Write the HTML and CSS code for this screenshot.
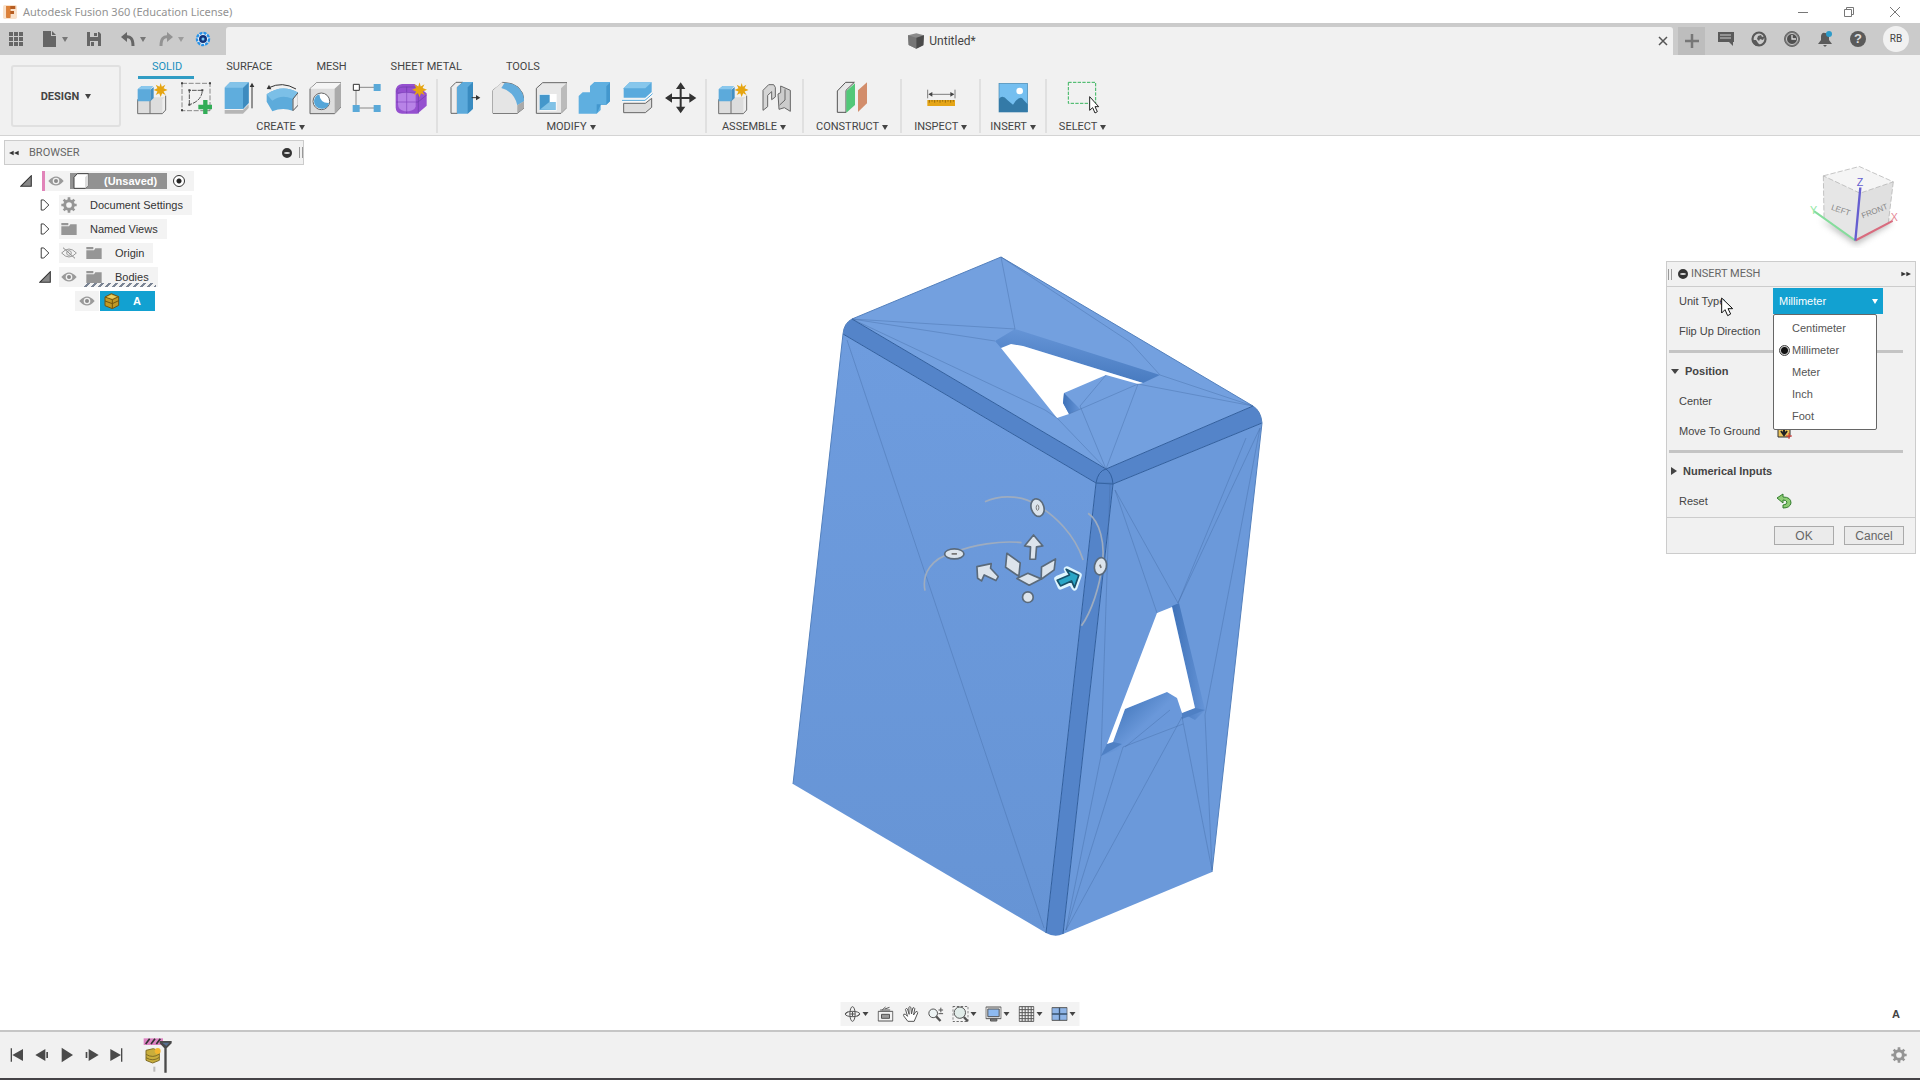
FILE: index.html
```html
<!DOCTYPE html>
<html lang="en">
<head>
<meta charset="utf-8">
<title>Autodesk Fusion 360 (Education License)</title>
<link rel="stylesheet" href="styles.css">
</head>
<body>
<svg class="sprite" aria-hidden="true">
  <symbol id="eye" viewBox="0 0 48 30"><path d="M1 15Q24-12 47 15Q24 42 1 15Z" fill="#9a9a9a"/><circle cx="24" cy="15" r="10" fill="#f1f1f1"/><circle cx="24" cy="15" r="6" fill="#8b8b8b"/></symbol>
  <symbol id="eye-off" viewBox="0 0 48 36"><path d="M2 18Q24-6 46 18Q24 42 2 18Z" fill="none" stroke="#9a9a9a" stroke-width="3"/><circle cx="24" cy="18" r="7" fill="none" stroke="#9a9a9a" stroke-width="3"/><path d="M6 2L42 34" stroke="#8b8b8b" stroke-width="3"/></symbol>
  <symbol id="folder" viewBox="0 0 48 40"><path d="M1 2H22V9H1ZM1 12H24L28 6H47V38H1Z" fill="#969696"/></symbol>
  <symbol id="closed" viewBox="0 0 30 38"><path d="M3 3H11L27 19L11 35H3Z" fill="#fff" stroke="#333" stroke-width="3"/></symbol>
  <symbol id="open" viewBox="0 0 34 34"><path d="M32 2V32H2Z" fill="#888" stroke="#333" stroke-width="3"/></symbol>
  <symbol id="gear" viewBox="0 0 48 48"><circle cx="24" cy="24" r="13" fill="none" stroke="#959595" stroke-width="9"/><path d="M24 1V10M24 38V47M1 24H10M38 24H47M8 8L14 14M34 34L40 40M40 8L34 14M14 34L8 40" stroke="#959595" stroke-width="8"/></symbol>
  <symbol id="star" viewBox="0 0 48 48"><path d="M24 0L28 13L40 6L34 18L48 24L34 29L41 41L29 35L24 48L19 35L7 41L13 29L0 24L13 18L7 6L20 13Z" fill="#e6a511"/></symbol>
  <symbol id="component" viewBox="0 0 102 102"><path d="M8 55H45V98H8ZM45 55L56 49H92V88L82 98H45Z" fill="#ddd"/><path d="M45 55H82L92 46V87L82 98V55" fill="#eee"/><path d="M8 55V98H82L92 87V44M45 98V57" fill="none" stroke="#6f6f6f" stroke-width="3"/><path d="M8 25L20 15H52L46 25V61H8Z" fill="#5caadb"/><path d="M8 25L20 15H55L46 25Z" fill="#8ac8ed"/><path d="M46 61L56 51V18L46 26Z" fill="#438fc3"/><use href="#star" x="56" y="6" width="42" height="42"/></symbol>
</svg>

<div class="app">
  <header class="titlebar">
    <svg class="app-logo" viewBox="0 0 42 42"><rect width="42" height="42" rx="5" fill="#fae2cb"/><path d="M10 3H37V12H22V18H33V27H22V38H10Z" fill="#b65d22"/><path d="M10 3H22V38H10Z" fill="#de8137"/></svg>
    <span class="app-name">Autodesk Fusion 360 (Education License)</span>
    <div class="window-buttons">
      <button aria-label="Minimize"><svg viewBox="0 0 12 12"><path d="M1 6.500H11" class="thin"/></svg></button>
      <button aria-label="Restore"><svg viewBox="0 0 12 12"><path d="M1.500 3.500H8.500V10.500H1.500ZM3.500 3V1.500H10.500V8.500H9" class="thin"/></svg></button>
      <button aria-label="Close"><svg viewBox="0 0 12 12"><path d="M1 1L11 11M11 1L1 11" class="thin"/></svg></button>
    </div>
  </header>

  <div class="tabstrip">
    <div class="quick">
      <button aria-label="Data panel"><svg viewBox="0 0 16 16"><path d="M1 1H5V5H1ZM6 1H10V5H6ZM11 1H15V5H11ZM1 6H5V10H1ZM6 6H10V10H6ZM11 6H15V10H11ZM1 11H5V15H1ZM6 11H10V15H6ZM11 11H15V15H11Z" fill="#666"/></svg></button>
      <button class="with-caret" aria-label="File"><svg viewBox="0 0 16 16"><path d="M1 0H9V5H14V16H1ZM10 0L14 4H10Z" fill="#666"/></svg><i class="caret"></i></button>
      <button class="save" aria-label="Save"><svg viewBox="0 0 16 16"><path d="M1 1H13L15 3V15H1Z" fill="#666"/><path d="M4 1H12V6H4ZM4 10H12V15H4Z" fill="#cbcbcb"/><path d="M8 2H11V5H8ZM5 11H8V15H5Z" fill="#666"/></svg></button>
      <button class="with-caret undo" aria-label="Undo"><svg viewBox="0 0 16 16"><path d="M1 6L7 1V11Z" fill="#666"/><path d="M5 6Q13 4 13 15" fill="none" stroke="#666" stroke-width="3"/></svg><i class="caret"></i></button>
      <button class="with-caret redo" aria-label="Redo"><svg viewBox="0 0 16 16"><path d="M15 6L9 1V11Z" fill="#666"/><path d="M11 6Q3 4 3 15" fill="none" stroke="#666" stroke-width="3"/></svg><i class="caret"></i></button>
      <button aria-label="Online"><svg viewBox="0 0 16 16"><circle cx="8" cy="8" r="6" fill="#fff" stroke="#2792e8" stroke-width="2.400" stroke-dasharray="3 1"/><circle cx="8" cy="8" r="4" fill="#12347b"/><circle cx="8" cy="8" r="1.500" fill="#77c8f5"/></svg></button>
    </div>
    <div class="doc-tab">
      <svg class="doc-icon" viewBox="0 0 48 46"><path d="M0 6L25 0L48 6L46 36L25 46L2 35Z" fill="#8b8b8b"/><path d="M0 6L25 13V46L2 35Z" fill="#767676"/><path d="M25 13L48 6L46 36L25 46Z" fill="#4b4b4b"/></svg>
      <span>Untitled*</span>
      <button class="doc-close" aria-label="Close tab"><svg viewBox="0 0 10 10"><path d="M1 1L9 9M9 1L1 9" stroke="#555" stroke-width="1.500"/></svg></button>
    </div>
    <button class="new-tab" aria-label="New tab"><svg viewBox="0 0 16 16"><path d="M8 1V15M1 8H15" stroke="#777" stroke-width="2.500"/></svg></button>
    <div class="account">
      <button aria-label="Comments"><svg viewBox="0 0 16 16"><path d="M0 1H16V11H15V15L11 11H0Z" fill="#5a5a5a"/><path d="M2 4H13M2 7H13" stroke="#ccc"/></svg></button>
      <button aria-label="Extensions"><svg viewBox="0 0 16 16"><circle cx="8" cy="8" r="6.500" fill="#cbcbcb" stroke="#5a5a5a" stroke-width="2.200"/><path d="M1 9H5L7 12L10 15H5Q2 13 1 9ZM7 5L10 4L11 6L14 5L12 9L9 8L8 10L6 8Z" fill="#5a5a5a"/></svg></button>
      <button aria-label="Job status"><svg viewBox="0 0 16 16"><circle cx="8" cy="8" r="7.500" fill="#777" stroke="#666"/><circle cx="8" cy="8" r="5.500" fill="#505050" stroke="#ccc"/><path d="M8 4V8H12" fill="none" stroke="#ddd" stroke-width="1.300"/></svg></button>
      <button aria-label="Notifications"><svg viewBox="0 0 16 16"><path d="M1 13L4 9V5Q5 1 8 2Q12 2 12 6V9L15 13ZM6 14H10L8 16Z" fill="#5a5a5a"/><circle cx="12" cy="3" r="3" fill="#2d9bc9"/></svg></button>
      <button class="help" aria-label="Help">?</button>
      <button class="avatar">RB</button>
    </div>
  </div>

  <nav class="ribbon">
    <button class="workspace">DESIGN <i class="caret"></i></button>
    <div class="ribbon-main">
      <div class="ribbon-tabs">
        <button class="active">SOLID</button><button>SURFACE</button><button>MESH</button><button>SHEET METAL</button><button>TOOLS</button>
      </div>
      <div class="groups">
        <section class="group">
          <div class="tools">
            <button aria-label="New component"><svg viewBox="0 0 102 102"><use href="#component"/></svg></button>
            <button aria-label="Create sketch"><svg viewBox="532 243 102 102"><path d="M544 250H628V332H544Z" fill="none" stroke="#555" stroke-width="2" stroke-dasharray="15 5"/><path d="M566 314V271H605Q603 303 566 314" fill="none" stroke="#555" stroke-width="3" stroke-dasharray="14 3"/><path d="M541 247h6v6h-6zM625 247h6v6h-6zM541 328h6v6h-6zM563 268h6v6h-6zM602 268h6v6h-6zM563 311h6v6h-6z" fill="#444"/><path d="M614 300V342M593 321H636" stroke="#32ad57" stroke-width="13"/></svg></button>
            <button aria-label="Extrude"><svg viewBox="661 243 102 102"><path d="M672 330H727L744 313V324L727 341H672Z" fill="#b6b6b6"/><path d="M672 263L688 247H744V309L727 327H672Z" fill="#5faddd"/><path d="M727 263L744 247V309L727 327Z" fill="#3e8bbf"/><path d="M672 263L688 247H744L727 263Z" fill="#83c3e9"/><path d="M754 325V256" stroke="#333" stroke-width="3"/><path d="M747 261L754 248L761 261Z" fill="#333"/></svg></button>
            <button aria-label="Revolve"><svg viewBox="790 243 102 102"><path d="M798 283Q845 250 894 279L876 300V332Q845 321 815 334L798 305Z" fill="#5dabdb"/><path d="M798 283Q845 250 894 279L875 296Q842 282 815 302Z" fill="#7bbfe7"/><path d="M877 297L893 277V315L877 332Z" fill="#eee" stroke="#555" stroke-width="3"/><path d="M886 267Q845 243 805 263" fill="none" stroke="#333" stroke-width="3"/><path d="M798 267L805 254L812 268Z" fill="#333"/></svg></button>
            <button aria-label="Hole"><svg viewBox="919 243 102 102"><path d="M928 266L948 248H1022V320L1002 341H928Z" fill="#ddd" stroke="#666" stroke-width="3"/><path d="M928 266L948 248H1022L1002 266Z" fill="#f5f5f5"/><path d="M1002 266L1022 248V320L1002 341Z" fill="#aaa"/><circle cx="962" cy="304" r="25" fill="#fff" stroke="#666" stroke-width="3"/><path d="M956 283Q958 310 985 309Q981 328 962 326Q940 324 940 303Q941 288 956 283Z" fill="#55a6d8"/></svg></button>
            <button aria-label="Pattern"><svg viewBox="1048 243 102 102"><path d="M1066 262H1128M1066 262V324H1128" fill="none" stroke="#555" stroke-width="2"/><path d="M1058 253h18v18h-18z" fill="#fff" stroke="#333" stroke-width="3"/><path d="M1119 252h21v21h-21zM1119 315h21v21h-21zM1056 315h21v21h-21z" fill="#5aa9d8"/></svg></button>
            <button aria-label="Create form"><svg viewBox="1177 243 102 102"><path d="M1204 252H1242L1278 280V317L1250 341H1204Q1185 341 1185 322V275Q1185 254 1204 252Z" fill="#9550cf"/><path d="M1188 277Q1190 261 1207 261H1248L1253 286V341M1218 260V340M1187 306H1252L1278 285M1188 279H1252" fill="none" stroke="#6e3baa" stroke-width="2"/><path d="M1192 282Q1215 274 1245 282V320Q1241 334 1212 334Q1192 330 1192 312Z" fill="#c090ec" opacity=".8"/><path d="M1218 278V333M1192 306H1245" stroke="#8847c2" stroke-width="2"/><use href="#star" x="1234" y="247" width="45" height="45"/></svg></button>
          </div>
          <button class="group-name">CREATE <i class="caret"></i></button>
        </section>
        <section class="group">
          <div class="tools">
            <button aria-label="Press pull"><svg viewBox="139 93 102 102"><path d="M151 112L166 97H187L170 112V190H151Z" fill="#eee" stroke="#666" stroke-width="3"/><path d="M169 112L186 96H217V176L201 191H169Z" fill="#5caadb"/><path d="M201 112L217 96V176L201 191Z" fill="#398bc0"/><path d="M213 143H229" stroke="#333" stroke-width="3"/><path d="M226 135L239 143L226 151Z" fill="#333"/></svg></button>
            <button aria-label="Fillet"><svg viewBox="268 93 102 102"><path d="M277 121L306 97Q367 98 371 154V173L350 190H277Z" fill="#ddd" stroke="#666" stroke-width="3"/><path d="M277 121L302 98L315 99L303 116Q342 120 349 165L351 189H277Z" fill="#e5e5e5"/><path d="M312 98Q365 101 371 153L350 166Q341 125 302 114Z" fill="#63addd"/><path d="M350 166L371 153V173L350 190Z" fill="#aaa"/></svg></button>
            <button aria-label="Shell"><svg viewBox="397 93 102 102"><path d="M407 115L426 98H499V172L481 190H407Z" fill="#e8e8e8" stroke="#666" stroke-width="3"/><path d="M481 115L499 98V172L481 190Z" fill="#bbb"/><path d="M417 132H468V182H417Z" fill="#fff"/><path d="M417 134H447V156H464V180H417Z" fill="#4497cb"/><path d="M417 179L446 156H465V180Z" fill="#81c2e6"/></svg></button>
            <button aria-label="Combine"><svg viewBox="526 93 102 102"><path d="M534 138L546 127H568V108L581 96H630V152L617 164H600V180L588 191H534Z" fill="#5fafe0"/><path d="M617 109L630 96V152L617 164H600L588 191V163H617Z" fill="#4397cd"/></svg></button>
            <button aria-label="Split body"><svg viewBox="655 93 102 102"><path d="M669 115L687 97H753V126L734 143H669Z" fill="#59aadd"/><path d="M669 115L687 97H753L734 115Z" fill="#87c7ec"/><path d="M669 160H734L753 145V172L734 188H669Z" fill="#ddd" stroke="#666" stroke-width="3"/><path d="M664 151H733L756 131" fill="none" stroke="#fff" stroke-width="7"/><path d="M664 151H733L756 131" fill="none" stroke="#4fa4d7" stroke-width="3"/></svg></button>
            <button aria-label="Move"><svg class="move" viewBox="784 93 102 102"><path d="M840 106V181M804 144H877" stroke="#333" stroke-width="6"/><path d="M826 117L840 97L854 117ZM826 170L840 190L854 170ZM814 130L793 144L814 158ZM866 130L887 144L866 158Z" fill="#333"/></svg></button>
          </div>
          <button class="group-name">MODIFY <i class="caret"></i></button>
        </section>
        <section class="group">
          <div class="tools">
            <button aria-label="New component"><svg viewBox="0 0 102 102"><use href="#component"/></svg></button>
            <button aria-label="Joint"><svg viewBox="178 183 102 102"><path d="M190 211L207 194H222L227 202V231L216 239V215L204 226V260L190 271Z" fill="#d5d5d5" stroke="#666" stroke-width="3"/><path d="M243 198L272 211V274L254 263L238 268L235 222L243 218Z" fill="#ccc" stroke="#666" stroke-width="3"/><path d="M256 208V240L240 255" fill="none" stroke="#666" stroke-width="3"/></svg></button>
          </div>
          <button class="group-name">ASSEMBLE <i class="caret"></i></button>
        </section>
        <section class="group single">
          <div class="tools">
            <button aria-label="Construct plane"><svg viewBox="408 183 102 102"><path d="M415 213L440 187H466L441 211V277H415Z" fill="#e8e8e8" stroke="#555" stroke-width="3"/><path d="M442 213L468 190V255L442 278Z" fill="#52c878"/><path d="M477 211L504 187V250L477 276Z" fill="#d28d6b"/></svg></button>
          </div>
          <button class="group-name">CONSTRUCT <i class="caret"></i></button>
        </section>
        <section class="group single">
          <div class="tools">
            <button aria-label="Measure"><svg viewBox="674 183 102 102"><path d="M685 209V235M767 209V235M690 223H762" stroke="#444" stroke-width="2"/><path d="M687 223L699 216V230ZM765 223L753 216V230Z" fill="#444"/><rect x="684" y="240" width="83" height="18" fill="#e5a516"/><path d="M690 240V248M698 240V245M706 240V248M714 240V245M722 240V248M730 240V245M738 240V248M746 240V245M754 240V248M762 240V245" stroke="#765000" stroke-width="2"/></svg></button>
          </div>
          <button class="group-name">INSPECT <i class="caret"></i></button>
        </section>
        <section class="group tight">
          <div class="tools">
            <button aria-label="Insert image"><svg viewBox="895 183 102 102"><rect x="904" y="190" width="86" height="86" fill="#75bff0" stroke="#4688b0" stroke-width="2"/><path d="M904 236Q915 223 929 240L946 254Q967 222 978 240L990 253V276H904Z" fill="#347aa7"/><circle cx="966" cy="213" r="10" fill="#fff"/></svg></button>
          </div>
          <button class="group-name">INSERT <i class="caret"></i></button>
        </section>
        <section class="group single">
          <div class="tools">
            <button aria-label="Select"><svg viewBox="1110 183 102 102"><rect x="1117" y="187" width="82" height="63" fill="none" stroke="#36b45c" stroke-width="3" stroke-dasharray="10 4"/><path d="M1181 230V271L1190 263L1197 279L1204 275L1197 260H1208Z" fill="#fff" stroke="#222" stroke-width="3"/></svg></button>
          </div>
          <button class="group-name">SELECT <i class="caret"></i></button>
        </section>
      </div>
    </div>
  </nav>

  <main class="viewport">
    <svg class="model" viewBox="0 136 1920 894" role="img" aria-label="Mesh body A">
      <defs>
        <linearGradient id="frontFace" x1="0" y1="0" x2="0" y2="1"><stop offset="0" stop-color="#6e9cde"/><stop offset="1" stop-color="#6694d5"/></linearGradient>
        <linearGradient id="wall" x1="0" y1="1" x2="0.300" y2="0"><stop offset="0" stop-color="#3e72b8"/><stop offset="1" stop-color="#6796d8"/></linearGradient>
        <linearGradient id="wallSide" x1="0" y1="0" x2="1" y2="0"><stop offset="0" stop-color="#3f72b8"/><stop offset="1" stop-color="#6594d7"/></linearGradient>
        <linearGradient id="shade" gradientUnits="userSpaceOnUse" x1="1117" y1="705" x2="1150" y2="740"><stop offset="0" stop-color="#4478bc"/><stop offset=".7" stop-color="#6a98da"/></linearGradient>
      </defs>
      <path d="M1001 257L1253 406L1106 469L852 319Z" fill="#73a0df"/>
      <path d="M843 334L1096 483L1046 933L793 784Z" fill="url(#frontFace)"/>
      <path d="M1113 484L1262 423L1212 872L1063 934Z" fill="#6b99da"/>
      <path d="M843 334Q844 323 852 319L1106 469L1096 483ZM1106 469L1253 406Q1261 411 1262 423L1113 484ZM1096 483Q1098 471 1106 469Q1112 473 1113 484L1063 934Q1055 938 1046 933Z" fill="#5484c9"/>
      <path d="M852 319L1106 469L1253 406M843 334L1096 483L1046 933M1262 423L1113 484L1063 934M1096 483Q1098 471 1106 469Q1112 473 1113 484Z" fill="none" stroke="#315f9e" stroke-width="1"/>
      <path d="M1096 483H1112" fill="none" stroke="#416fae" stroke-width="1" opacity=".5"/>
      <path d="M793 784L843 334Q844 323 852 319L1001 257L1253 406Q1261 411 1262 423L1212 872" fill="none" stroke="#5380bd" stroke-width="1"/>
      <path d="M995 341L1015 329L1160 375L1143 383L1023 346L1001 348Z" fill="url(#wall)"/>
      <path d="M1001 348L1011 344L1023 346L1143 383L1138 384L1106 375L1064 393L1063 403L1069 414L1057 418Z" fill="#fff"/>
      <path d="M1064 393L1080 409L1069 414L1063 403Z" fill="url(#wallSide)"/>
      <path d="M1172 606L1179 603L1205 710L1195 720L1182 713L1195 708Z" fill="url(#wallSide)"/>
      <path d="M1125 709L1167 692L1177 698L1181 720L1128 746L1101 756L1107 744L1113 742Z" fill="url(#shade)"/>
      <path d="M1107 744L1113 742L1122 744L1101 756ZM1182 713L1195 708L1205 710L1182 719Z" fill="#4f80c4"/>
      <path d="M1157 613L1172 607L1195 708L1182 713L1177 698L1167 692L1125 709L1113 742L1107 744Z" fill="#fff"/>
      <path d="M1001 257L1015 329L852 319L995 341M1001 257L1130 342L1160 375L1253 406L1138 384L1069 414M852 319L1045 410L1057 418L1106 469L1080 406L1106 375M1106 469L1138 384M847 340L1044 928M1115 490L1157 613M1115 490L1178 603L1260 428L1205 715L1212 870L1182 717L1066 930L1123 747L1183 724M1110 484L1101 756L1066 930M1246 438L1178 603M1125 747L1170 710" fill="none" stroke="#436ca5" stroke-width="1" opacity=".4"/>
      <g transform="translate(900 470) scale(.333)" stroke-linejoin="round">
        <path d="M255 95C310 70 375 80 410 105C465 135 525 195 550 270M75 362C65 310 95 265 160 248C220 225 300 211 365 218M565 130C600 155 617 220 607 285C600 350 575 425 545 468" fill="none" stroke="#9eacbf" stroke-width="5"/>
        <g fill="#dce4ec" stroke="#5a6a7b" stroke-width="5">
          <ellipse cx="413" cy="113" rx="19" ry="27" transform="rotate(-18 413 113)"/><ellipse cx="163" cy="252" rx="29" ry="15"/><ellipse cx="602" cy="289" rx="18" ry="26" transform="rotate(12 602 289)"/><circle cx="384" cy="382" r="16"/>
          <path d="M390 268L392 231L374 228L401 195L429 228L410 231L407 268ZM231 290L274 281L272 295L295 320L288 332L253 315L245 333L233 325ZM321 250L361 279L357 319L317 292ZM467 267L463 300L424 328L425 291ZM351 326L384 310L424 327L388 346Z"/>
        </g>
        <ellipse cx="413" cy="113" rx="4" ry="8" fill="none" stroke="#777" stroke-width="3"/><path d="M155 252H171M600 284L604 294" stroke="#777" stroke-width="5"/>
        <path d="M472 327L509 312L501 298L537 316L524 353L514 336L482 350Z" fill="#29b0d2" stroke="#e0f6ff" stroke-width="18"/><path d="M472 331L509 315L499 298L537 316L524 353L515 333L482 348Z" fill="#29a6c7" stroke="#17516a" stroke-width="5"/>
      </g>
    </svg>

    <aside class="browser">
      <header class="palette-head"><svg class="arrows" viewBox="0 0 30 14"><path d="M14 0V14L0 7ZM29 0V14L15 7Z" fill="#333"/></svg><span>BROWSER</span><i class="minus"></i><i class="grip"></i></header>
      <ul class="tree">
        <li class="lvl-root"><svg class="toggle" viewBox="0 0 34 34"><use href="#open"/></svg><div class="node marked"><svg class="ico eye"><use href="#eye"/></svg><div class="doc-label"><svg class="ico" viewBox="0 0 48 48"><path d="M3 13L13 2H46V38L36 46H3Z" fill="#fff" stroke="#444" stroke-width="3"/><path d="M36 13L46 3V38L36 46Z" fill="#ddd"/></svg><b>(Unsaved)</b></div><input type="radio" checked aria-label="Activate component"></div></li>
        <li><svg class="toggle"><use href="#closed"/></svg><div class="node"><svg class="ico"><use href="#gear"/></svg><span>Document Settings</span></div></li>
        <li><svg class="toggle"><use href="#closed"/></svg><div class="node"><svg class="ico"><use href="#folder"/></svg><span>Named Views</span></div></li>
        <li><svg class="toggle"><use href="#closed"/></svg><div class="node"><svg class="ico"><use href="#eye-off"/></svg><svg class="ico second"><use href="#folder"/></svg><span>Origin</span></div></li>
        <li><svg class="toggle"><use href="#open"/></svg><div class="node hatched"><svg class="ico"><use href="#eye"/></svg><svg class="ico second"><use href="#folder"/></svg><span>Bodies</span></div></li>
        <li class="lvl-body"><div class="node"><svg class="ico"><use href="#eye"/></svg></div><div class="selected"><svg class="ico" viewBox="0 0 48 48"><path d="M3 12L22 2L44 11V37L25 47L3 38Z" fill="#c19a25" stroke="#725511" stroke-width="3"/><path d="M3 12L25 20L44 11M25 20V47M3 24L25 32L44 23" fill="none" stroke="#72550f" stroke-width="3"/><path d="M8 12L22 5L38 11L25 17Z" fill="#e9cc62"/></svg><b>A</b></div></li>
      </ul>
    </aside>

    <svg class="viewcube" viewBox="480 40 270 275" role="img" aria-label="View cube">
      <defs><filter id="soft"><feGaussianBlur stdDeviation="9"/></filter></defs>
      <path d="M510 210L618 285L725 220L690 190L610 240Z" fill="#777" opacity=".5" filter="url(#soft)"/>
      <path d="M520 78L628 50L730 96L630 130Z" fill="#f5f5f5"/><path d="M520 78L630 130L616 272L522 205Z" fill="#e6e6e6"/><path d="M630 130L730 96L715 218L616 272Z" fill="#e0e0e0"/>
      <path d="M520 78L628 50L730 96L630 130ZM520 78L522 205M730 96L715 218" fill="none" stroke="#aaa" stroke-width="2" stroke-dasharray="16 6"/>
      <path d="M492 184L616 272" stroke="#85dd9c" stroke-width="6"/><path d="M616 272L728 213" stroke="#d96b7e" stroke-width="6"/><path d="M616 272L631 113" stroke="#655ed0" stroke-width="7"/>
      <text x="542" y="179" class="face" transform="rotate(19 542 179)">LEFT</text><text x="638" y="206" class="face" transform="rotate(-21 638 206)">FRONT</text>
      <text x="620" y="108" class="axis" fill="#655ed0">Z</text><text x="722" y="215" class="axis" fill="#e58795">X</text><text x="480" y="193" class="axis" fill="#91e8a4">Y</text>
    </svg>

    <section class="dialog">
      <header class="palette-head"><i class="grip"></i><i class="minus"></i><span>INSERT MESH</span><svg class="arrows" viewBox="0 0 30 14"><path d="M1 0V14L15 7ZM16 0V14L30 7Z" fill="#333"/></svg></header>
      <div class="row"><label for="unit">Unit Type</label>
        <div class="unit">
          <select id="unit"><option>Millimeter</option><option>Centimeter</option><option>Meter</option><option>Inch</option><option>Foot</option></select><i class="caret"></i>
          <div class="unit-menu">
            <label><input type="radio" name="u">Centimeter</label><label><input type="radio" name="u" checked>Millimeter</label><label><input type="radio" name="u">Meter</label><label><input type="radio" name="u">Inch</label><label><input type="radio" name="u">Foot</label>
          </div>
        </div>
      </div>
      <div class="row"><span>Flip Up Direction</span></div>
      <hr>
      <button class="row fold"><i class="caret"></i>Position</button>
      <div class="row"><span>Center</span></div>
      <div class="row"><span>Move To Ground</span><button class="tool" aria-label="Move to ground"><svg viewBox="0 0 16 16"><path d="M2 2H14V14H2Z" fill="#ebc45c" stroke="#333"/><path d="M8 2V11M5 8L8 12L11 8" fill="none" stroke="#222" stroke-width="2"/><path d="M10 13H16M13 10V16" stroke="#d33"/></svg></button></div>
      <hr>
      <button class="row fold"><i class="caret right"></i>Numerical Inputs</button>
      <div class="row"><span>Reset</span><button class="tool" aria-label="Reset"><svg viewBox="0 0 16 16"><path d="M1 5L7 1V4Q15 4 15 10Q14 15 7 15V12Q11 12 11 9Q10 7 7 7V10Z" fill="#8dcc74" stroke="#337d2e"/></svg></button></div>
      <footer><button>OK</button><button>Cancel</button></footer>
    </section>
    <svg class="pointer" viewBox="0 0 36 60"><path d="M2 3V48L12 38L20 56L29 51L21 35H35Z" fill="#fff" stroke="#111" stroke-width="3"/></svg>

    <div class="navbar">
      <button aria-label="Orbit"><svg viewBox="0 0 48 48"><ellipse cx="24" cy="24" rx="22" ry="8"/><ellipse cx="24" cy="24" rx="8" ry="22"/><path d="M17 24H31M24 17V31M2 24L10 18M46 24L38 30"/></svg><i class="caret"></i></button>
      <button aria-label="Look at"><svg viewBox="0 0 48 48"><path d="M2 16H46V45H2Z"/><path d="M12 25H36V37H12Z" fill="#999"/><path d="M8 12H38M14 12L24 3M22 9L36 4"/></svg></button>
      <button aria-label="Pan"><svg viewBox="0 0 48 48"><path d="M16 46L3 29Q2 22 9 25L15 31L9 10Q11 5 15 9L20 25L19 4Q22 0 25 4L27 24L31 6Q35 3 37 8L33 27L40 17Q45 15 46 20L35 46Z" fill="#fff"/></svg></button>
      <button aria-label="Zoom"><svg viewBox="0 0 48 48"><circle cx="17" cy="22" r="13" fill="#edf3f4"/><path d="M26 31L39 45" stroke-width="7"/><path d="M33 12H47M40 5V19M33 23H47"/></svg></button>
      <button aria-label="Fit"><svg viewBox="0 0 48 48"><path d="M1 1H47V47H1Z" stroke-dasharray="7 5"/><circle cx="22" cy="20" r="17" fill="#e1ece9"/><path d="M34 33L46 46" stroke-width="7"/></svg><i class="caret"></i></button>
      <button aria-label="Display settings"><svg viewBox="0 0 48 48"><path d="M1 3H47V38H1Z" fill="#e7e7e7"/><path d="M7 9H41V32H7Z" fill="#8ebaf0"/><path d="M15 39H34V45H15Z" fill="#888"/></svg><i class="caret"></i></button>
      <button aria-label="Grid settings"><svg viewBox="0 0 48 48"><path d="M2 2H46V46H2ZM11 2V46M20 2V46M29 2V46M38 2V46M2 11H46M2 20H46M2 29H46M2 38H46"/></svg><i class="caret"></i></button>
      <button aria-label="Viewports"><svg viewBox="0 0 48 48"><path d="M1 5H47V43H1Z" fill="#8fb5e7"/><path d="M24 5V43M1 24H47" stroke="#39516d" stroke-width="4"/></svg><i class="caret"></i></button>
    </div>
    <b class="status">A</b>
  </main>

  <footer class="timeline">
    <div class="playback">
      <button aria-label="First"><svg viewBox="0 0 48 48"><path d="M7 4V44" stroke="#4a4a4a" stroke-width="4"/><path d="M42 6V42L10 24Z"/></svg></button>
      <button aria-label="Step back"><svg viewBox="0 0 48 48"><path d="M34 6V42L4 24ZM37 15H42V33H37Z"/></svg></button>
      <button aria-label="Play"><svg viewBox="0 0 48 48"><path d="M8 2V46L42 24Z"/></svg></button>
      <button aria-label="Step forward"><svg viewBox="0 0 48 48"><path d="M14 6V42L44 24ZM5 15H10V33H5Z"/></svg></button>
      <button aria-label="Last"><svg viewBox="0 0 48 48"><path d="M38 4V44" stroke="#4a4a4a" stroke-width="4"/><path d="M4 6V42L36 24Z"/></svg></button>
    </div>
    <svg class="feature" viewBox="430 48 90 114"><path d="M432 55H490V75H432Z" fill="#dc82c1"/><path d="M438 72L450 56M454 72L466 56M470 72L482 56" stroke="#333" stroke-width="5"/><path d="M439 91L461 86L479 93V121L459 129L439 121Z" fill="#c9ae3c" stroke="#806d26" stroke-width="3"/><path d="M439 103Q460 116 479 102M439 113Q460 126 479 112" fill="none" stroke="#806d26" stroke-width="3"/><circle cx="474" cy="93" r="9" fill="#f3b62e"/><path d="M464 140V155" stroke="#bbb" stroke-width="6"/><path d="M480 63H516V70L501 85V158H494V85L480 70Z" fill="#4a4a4a"/><path d="M488 68H509L500 78Z" fill="#566f91"/></svg>
    <button class="timeline-settings" aria-label="Timeline settings"><svg><use href="#gear"/></svg></button>
  </footer>
</div>
</body>
</html>
```
FILE: styles.css
```css
* { box-sizing: border-box; }
body { margin: 0; font-family: "Liberation Sans", Arial, sans-serif; font-size: 11px; color: #444; background: #fff; }
button { margin: 0; padding: 0; border: 0; background: none; font: inherit; color: inherit; }
svg { display: block; flex: none; }
.sprite { position: absolute; width: 0; height: 0; }
.app { display: flex; flex-direction: column; min-height: 100vh; }
.caret { display: inline-block; flex: none; border: 3px solid transparent; border-top: 5px solid currentColor; border-bottom: 0; }
.caret.right { border: 4px solid transparent; border-left: 6px solid currentColor; border-right: 0; }

.titlebar { display: flex; align-items: center; height: 23px; padding-left: 3px; }
.app-logo { width: 14px; height: 14px; }
.app-name { margin-left: 6px; font: 11px/20px "Noto Sans", sans-serif; color: #929292; }
.window-buttons { display: flex; margin-left: auto; padding-right: 2px; }
.window-buttons button { display: grid; place-items: center; width: 46px; height: 20px; }
.window-buttons svg { width: 12px; height: 12px; }
.thin { fill: none; stroke: #777; stroke-width: 1; }

.tabstrip { display: flex; height: 32px; background: #cbcbcb; }
.quick { display: flex; align-items: center; width: 226px; padding-left: 8px; }
.quick svg { width: 16px; height: 16px; }
.quick button { margin-right: 18px; }
.quick .with-caret { display: flex; align-items: center; gap: 4px; color: #777; }
.quick .undo { margin-right: 12px; }
.quick .redo { margin-right: 11px; opacity: .55; }
.doc-tab { position: relative; flex: 1; display: flex; align-items: center; justify-content: center; gap: 5px; margin-top: 4px; padding-right: 15px; border-radius: 3px 3px 0 0; background: #f1f1f1; font: 12px/16px Roboto, sans-serif; }
.doc-icon { width: 16px; height: 16px; }
.doc-close { position: absolute; right: 5px; top: 9px; }
.doc-close svg { width: 10px; height: 10px; }
.new-tab { display: grid; place-items: center; width: 27px; height: 28px; margin: 4px 5px 0; background: #bdbdbd; }
.new-tab svg { width: 16px; height: 16px; }
.account { display: flex; align-items: center; gap: 17px; padding: 0 11px 0 8px; }
.account svg { width: 16px; height: 16px; }
.help { width: 16px; height: 16px; border-radius: 50%; background: #5a5a5a; color: #ddd; font-weight: bold; font-size: 13px; line-height: 16px; }
.account .avatar { width: 26px; height: 26px; border-radius: 50%; background: #f1f1f1; font: 10px/26px Roboto, sans-serif; }

.ribbon { display: flex; height: 81px; background: #f1f1f1; border-bottom: 1px solid #d4d4d4; font-family: Roboto, sans-serif; }
.workspace { display: flex; align-items: center; justify-content: center; gap: 6px; width: 110px; height: 62px; margin: 10px 3px 0 11px; border: 2px solid #e0e0e0; border-radius: 3px; font-weight: bold; }
.ribbon-main { flex: 1; }
.ribbon-tabs { display: flex; height: 24px; padding-left: 6px; }
.ribbon-tabs button { position: relative; padding: 0 22px; line-height: 20px; }
.ribbon-tabs .active { color: #198fbe; }
.ribbon-tabs .active::after { content: ""; position: absolute; left: 8px; right: 10px; bottom: 0; height: 3px; background: #319dc4; }
.groups { display: flex; padding-left: 2px; }
.group { display: flex; flex-direction: column; align-items: center; height: 54px; padding: 0 5px 0 4px; border-right: 2px solid #e0e0e0; }
.group:last-child { border-right: 0; }
.tools { display: flex; padding-top: 2px; }
.tools button { display: grid; place-items: center; width: 43px; }
.tools svg { width: 34px; height: 34px; }
.tools .move { overflow: visible; }
.group-name { display: flex; align-items: center; gap: 3px; height: 18px; margin-top: 3px; line-height: 18px; }
.group.single { padding: 0 12px; }
.group.tight { padding: 0 9px; }

.viewport { position: relative; flex: 1; overflow: hidden; }
.model { position: absolute; inset: 0; width: 100%; height: 100%; }
.browser { position: relative; width: 300px; margin: 4px 0 0 4px; }
.palette-head { display: flex; align-items: center; height: 25px; border: 1px solid #ccc; background: #f1f1f1; font: 11px/24px Roboto, sans-serif; color: #666; }
.arrows { width: 10px; height: 6px; }
.minus { width: 10px; height: 10px; border-radius: 50%; border: 4px solid #333; border-width: 4px 2px; background: #ddd; }
.grip { width: 4px; height: 11px; border: 1px solid #999; border-width: 0 1px; }
.browser .palette-head { padding-left: 4px; }
.browser .palette-head span { margin-left: 10px; }
.browser .minus { margin-left: auto; margin-right: 7px; }
.tree { list-style: none; margin: 0; padding: 4px 0 0; color: #333; }
.tree li { display: flex; align-items: center; height: 24px; padding-left: 35px; }
.tree .lvl-root { padding-left: 16px; }
.tree .lvl-body { padding-left: 71px; }
.toggle { width: 12px; height: 12px; margin-right: 8px; }
.lvl-root .toggle { margin-right: 10px; }
.node { position: relative; display: flex; align-items: center; height: 20px; padding: 0 9px 0 2px; background: #f3f3f3; }
.ico { width: 16px; height: 16px; }
.node > span { margin-left: 13px; }
.node .second { margin-left: 9px; }
.marked { border-left: 3px solid #e184b9; padding-left: 3px; }
.doc-label { display: flex; align-items: center; gap: 15px; height: 16px; margin: 0 6px; padding: 0 10px 0 3px; background: #929292; color: #fff; }
.node input { appearance: none; width: 12px; height: 12px; margin: 0; border: 1px solid #333; border-radius: 50%; background: radial-gradient(#222 0 2px, #fff 3px); }
.hatched::after { content: ""; position: absolute; left: 24px; right: 2px; bottom: 0; height: 4px; background: repeating-linear-gradient(135deg, transparent 0 3px, #7a8494 3px 5px); }
.lvl-body .node { padding: 0 4px; }
.selected { display: flex; align-items: center; gap: 13px; height: 20px; padding: 0 14px 0 4px; margin-left: 1px; background: #12a1d1; color: #fff; }

.viewcube { position: absolute; top: 27px; right: 20px; width: 90px; height: 92px; overflow: visible; }
.face { font: 24px "Liberation Sans", sans-serif; fill: #888; }
.axis { font: 32px "Liberation Sans", sans-serif; }
.dialog { position: absolute; top: 125px; right: 4px; width: 250px; background: #f1f1f1; border: 1px solid #ccc; }
.dialog .palette-head { border-width: 0 0 1px; padding: 0 4px 0 1px; }
.dialog .minus { margin: 0 3px 0 6px; }
.dialog .arrows { margin-left: auto; }
.row { display: flex; align-items: center; width: 100%; height: 30px; padding: 0 0 2px 12px; color: #444; }
.row > label, .row > span { width: 94px; }
.row.fold { padding-left: 4px; gap: 6px; font-weight: bold; text-align: left; }
.row.fold .caret { border-left-width: 4px; border-right-width: 4px; }
.row.fold .caret.right { border-left-width: 6px; border-right-width: 0; }
.dialog hr { height: 3px; margin: 3px 12px 4px 2px; border: 0; background: #c4c4c4; }
.unit { position: relative; width: 110px; height: 26px; }
.unit select { appearance: none; width: 110px; height: 26px; padding: 0 6px; border: 0; background: #12a1d1; color: #fff; font: inherit; }
.unit > .caret { position: absolute; right: 5px; top: 11px; color: #fff; }
.unit-menu { position: absolute; z-index: 2; top: 26px; left: 0; width: 104px; padding: 2px 0; border: 1px solid #666; border-radius: 2px; background: #fff; }
.unit-menu label { display: flex; align-items: center; gap: 2px; height: 22px; padding-left: 5px; color: #555; }
.unit-menu input { appearance: none; width: 11px; height: 11px; margin: 0; border-radius: 50%; }
.unit-menu input:checked { border: 1px solid #444; background: radial-gradient(#111 0 3px, #ccc 4px); }
.tool svg { width: 16px; height: 16px; margin-left: 3px; }
.dialog footer { display: flex; justify-content: flex-end; gap: 10px; padding: 8px 11px; border-top: 1px solid #ccc; }
.dialog footer button { width: 60px; height: 19px; border: 1px solid #aaa; background: #ebebeb; font-size: 12px; line-height: 16px; color: #666; }
.pointer { position: absolute; top: 161px; right: 187px; width: 12px; height: 20px; }
.navbar { position: absolute; bottom: 4px; left: 50%; transform: translateX(-50%); display: flex; align-items: center; gap: 9px; height: 24px; padding: 0 4px; background: #f3f3f3; color: #444; }
.navbar button { display: flex; align-items: center; gap: 2px; }
.navbar svg { width: 16px; height: 16px; fill: none; stroke: #555; stroke-width: 3; }
.navbar .caret { border-top-width: 4px; }
.status { position: absolute; right: 20px; bottom: 10px; line-height: 12px; }

.timeline { display: flex; align-items: center; height: 50px; padding: 0 13px 0 9px; border-top: 2px solid #c6c6c6; border-bottom: 2px solid #454347; background: #f1f1f1; }
.playback { display: flex; gap: 9px; }
.playback svg { width: 16px; height: 16px; fill: #4a4a4a; }
.feature { width: 30px; height: 38px; margin-left: 18px; }
.timeline-settings { margin-left: auto; }
.timeline-settings svg { width: 16px; height: 16px; }
```
